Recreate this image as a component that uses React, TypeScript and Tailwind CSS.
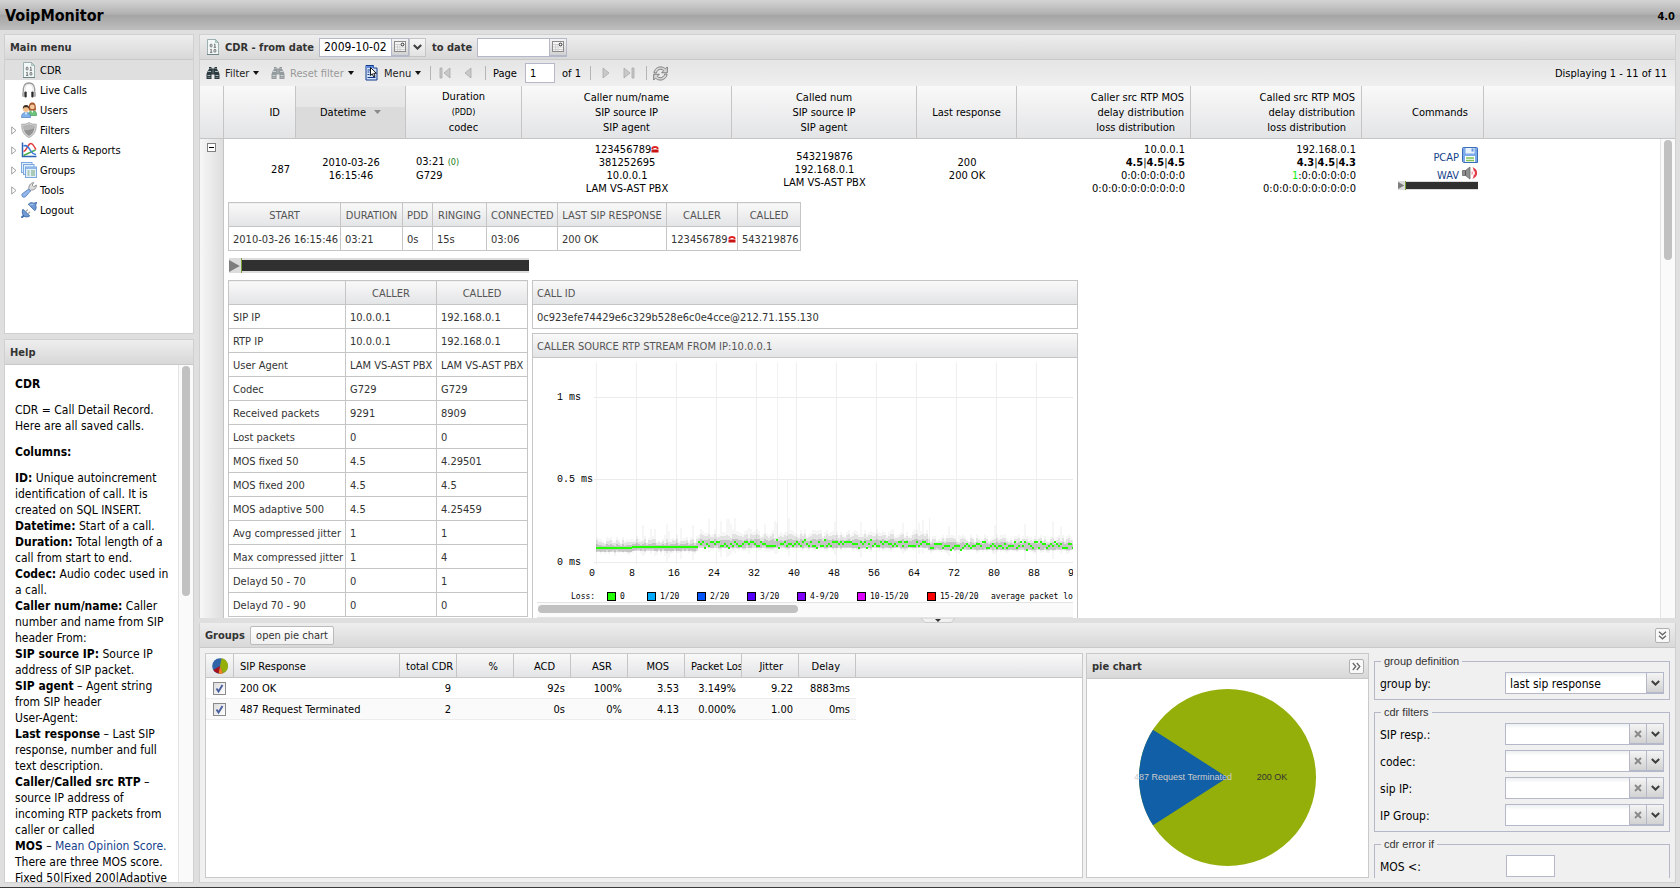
import { ReactNode } from "react";

const HEAD_BG = "bg-linear-to-b from-[#eeeeee] to-[#d8d8d8] border-b border-[#c9c9c9]";
const CELL_BG = "bg-linear-to-b from-[#f9f9f9] to-[#e3e4e6]";

/* ---------- icons ---------- */

const PageIcon = () => (
  <svg width="16" height="16" viewBox="0 0 16 16" className="shrink-0">
    <path d="M2.500 .5h8l3 3v12h-11z" fill="#f2f7f7" stroke="#9db0b0" />
    <path d="M10.500 .5v3h3z" fill="#b5dcd4" stroke="#8fa3a3" strokeWidth=".6" />
    <path d="M2 15.500h12" stroke="#6f8484" />
    <g fill="none" stroke="#555" strokeWidth=".8">
      <rect x="5.200" y="5.200" width="1.800" height="2.800" rx=".8" />
      <path d="M9 5.500l.9-.5v3.200M8.700 8.300h2.400M5.300 10.600l.9-.5v3.200M5 13.400h2.300" />
      <rect x="9" y="10.300" width="1.800" height="2.900" rx=".8" />
    </g>
  </svg>
);

const HeadphonesIcon = () => (
  <svg width="16" height="16" viewBox="0 0 16 16" className="shrink-0">
    <path d="M2.500 11C1.500 5 3.500 1 8 1s6.500 4 5.500 10" fill="none" stroke="#9a9a9a" strokeWidth="1.300" />
    <path d="M4 9.500C3.500 5 5.500 2.400 8 2.400s4.500 2.600 4 7.100" fill="none" stroke="#dcdcdc" strokeWidth=".9" />
    <rect x="1" y="9.500" width="3" height="5.500" rx="1.500" fill="#b5b5b5" />
    <rect x="3.500" y="9.500" width="2.200" height="6" rx="1" fill="#2d2d2d" />
    <rect x="12" y="9.500" width="3" height="5.500" rx="1.500" fill="#b5b5b5" />
    <rect x="10.300" y="9.500" width="2.200" height="6" rx="1" fill="#2d2d2d" />
  </svg>
);

const UsersIcon = () => (
  <svg width="16" height="16" viewBox="0 0 16 16" className="shrink-0">
    <path d="M7.500 13.500c0-3.500 1.500-5 4-5s4.300 1.500 4.300 5z" fill="#6cc47a" stroke="#3b8f4f" strokeWidth=".6" />
    <path d="M7.800 8.500C7.300 3 8.500.5 11.300.5S15.200 3 14.800 8.500z" fill="#a8552b" />
    <circle cx="11.300" cy="4.900" r="2.400" fill="#f5c99b" />
    <path d="M10.200 8.700l1.100 2.300 1.100-2.300z" fill="#fff" />
    <path d="M.4 15.500c0-3.500 1.700-5 4.600-5s4.600 1.500 4.600 5z" fill="#7fb2ea" stroke="#3d74b8" strokeWidth=".6" />
    <path d="M3.800 10.500L5 13l1.200-2.500z" fill="#fff" />
    <circle cx="5" cy="6.900" r="3" fill="#f3c08c" />
    <path d="M1.800 7.200c-.2-3 1.200-4.300 3.300-4.300S8.400 4.200 8.100 7.200C7.500 5.500 6.500 5.200 5 5.200s-2.600.3-3.200 2z" fill="#3a2a22" />
  </svg>
);

const ShieldIcon = () => (
  <svg width="16" height="16" viewBox="0 0 16 16" className="shrink-0">
    <path d="M8 .5c2 1.500 4 1.900 7.200 1.700C15.500 8.500 13.500 13 8 15.500 2.500 13 .5 8.500.8 2.200 4 2.400 6 2 8 .5z" fill="#d6d6d6" stroke="#a3a3a3" strokeWidth=".9" />
    <path d="M8 2.500c1.500 1 3 1.300 5.500 1.300C13.500 8.500 12 11.700 8 13.900 4 11.700 2.500 8.500 2.500 3.800 5 3.800 6.500 3.500 8 2.500z" fill="#929292" />
    <path d="M8 2.500C6.500 3.500 5 3.800 2.500 3.800c0 1.600.2 3 .6 4.200 3.400.6 7-.4 10.200-2 .2-.7.200-1.400.2-2.200C11 3.800 9.500 3.500 8 2.500z" fill="#b4b4b4" />
  </svg>
);

const ChartIcon = () => (
  <svg width="16" height="16" viewBox="0 0 16 16" className="shrink-0">
    <path d="M1.500 .5v14h14" fill="none" stroke="#2e63b4" strokeWidth="1.500" />
    <path d="M2.500 13.500L14.500 8" fill="none" stroke="#4caf50" strokeWidth="1.500" />
    <path d="M2.500 9.500C6 9 6.500 1.500 10 1.500c2.500 0 3 3.500 5 6" fill="none" stroke="#e23b3b" strokeWidth="1.500" />
    <path d="M2.500 4c3-1.500 5 1 7 4.500s3 3.500 5.500 4" fill="none" stroke="#3b78d8" strokeWidth="1.500" />
  </svg>
);

const GroupsIcon = () => (
  <svg width="16" height="16" viewBox="0 0 16 16" className="shrink-0">
    <g fill="#e4effc" stroke="#7ba8de">
      <rect x=".5" y=".5" width="10.500" height="10" />
      <rect x="2.500" y="2.500" width="10.500" height="10" />
      <rect x="4.500" y="5" width="11" height="10.500" />
    </g>
    <path d="M5 5h10v2H5z" fill="#8fb8e8" />
    <path d="M6.500 9h2M10 9h4M6.500 11h2M10 11h4M6.500 13h2M10 13h4" stroke="#6fa573" />
  </svg>
);

const WrenchIcon = () => (
  <svg width="16" height="16" viewBox="0 0 16 16" className="shrink-0">
    <path d="M8 7.500C7.200 4.200 9.300.8 12.800.6L11.200 3l1.600 1.700L15.300 3c.4 3-2 5.300-4.800 5L9 9.300z" fill="#dcdcdc" stroke="#8a8a8a" strokeWidth=".9" />
    <path d="M7.800 7l1.800 1.800-5 5.800c-2.200 1.900-4.800-.6-3.300-2.800z" fill="#93b7ea" stroke="#5580c0" strokeWidth=".9" />
  </svg>
);

const PlugIcon = () => (
  <svg width="16" height="16" viewBox="0 0 16 16" className="shrink-0">
    <path d="M.3 15.800L4 12.500" stroke="#3f6fb0" strokeWidth="2" />
    <path d="M2 7.200l6.800 6.800c-1.800 1.300-4.600 1.200-6 0S.6 9.200 2 7.200z" fill="#6f9ad6" stroke="#345f9e" strokeWidth=".8" />
    <path d="M4.800 9.500l2-2M7 11.700l2-2" stroke="#aaa" strokeWidth="1.300" />
    <path d="M7.300 2.200l6.500 6.500c1.800-2 1.600-4 .8-5.500L15.800.3l-3 .9c-1.600-1-4-.6-5.500 1z" fill="#6f9ad6" stroke="#345f9e" strokeWidth=".8" />
    <path d="M9 3.200c1-.8 2.300-1 3.300-.5" stroke="#bcd3f2" fill="none" />
  </svg>
);

const BinocularsIcon = ({ dim = false }: { dim?: boolean }) => (
  <svg width="14" height="14" viewBox="0 0 14 14" className={dim ? "shrink-0 opacity-45" : "shrink-0"}>
    <path d="M3 1h2.500v1.500h3V1H11v2l1.500 2.500 1 2.500v5h-5V8.500h-3V13h-5V8l1-2.500L3 3z" fill="#2c3a40" />
    <path d="M2 5.500h3M9 5.500h3M1.500 9.500h3M9.500 9.500h3" stroke="#a9b8bd" />
    <path d="M7 3.500v4M3.200 2.500h2M8.800 2.500h2M1.500 11.500h3M9.500 11.500h3" stroke="#7d8d93" strokeWidth=".8" />
  </svg>
);

const MenuIcon = () => (
  <svg width="14" height="16" viewBox="0 0 14 16" className="shrink-0">
    <path d="M1 .5h7.500V3H12v12H1z" fill="#d4e3fb" stroke="#143a8c" />
    <path d="M1.500 1h7v2h-7z" fill="#5a8be0" />
    <path d="M2.500 5h3M2.500 7h2M2.500 9.500h2M2.500 12.500h8" stroke="#143a8c" />
    <path d="M5.500 2.500v8l1.900-1.700 1.200 3 1.400-.6-1.200-2.900h2.600z" fill="#fff" stroke="#000" strokeWidth=".9" />
  </svg>
);

const CalendarIcon = () => (
  <svg width="12" height="11" viewBox="0 0 12 11">
    <rect x=".5" y=".5" width="11" height="10" fill="#f4f4f4" stroke="#8a8a8a" />
    <path d="M1 3.500h10M1 6h10M1 8.500h10M3.500 3v7M6 3v7" stroke="#c4c4c4" strokeWidth=".7" />
    <rect x="6.500" y="1.500" width="4" height="4" fill="#fff" />
    <circle cx="8.500" cy="3.500" r="1.400" fill="none" stroke="#222" />
  </svg>
);

const RefreshIcon = () => (
  <svg width="15" height="15" viewBox="0 0 16 16" fill="#d6d6d6" stroke="#6f6f6f" strokeWidth=".9" strokeLinejoin="round">
    <path d="M1 7.300C1.300 3.500 4.800.8 8.600 1c2 .1 3.500.9 4.600 2.100L15.300 1v6.200H9.200l2.200-2.300C10.500 4 9.500 3.500 8.300 3.500 6 3.500 4.200 5 3.600 7.300z" />
    <path d="M15 8.700c-.3 3.800-3.800 6.500-7.600 6.300-2-.1-3.500-.9-4.600-2.100L.7 15V8.800h6.100l-2.200 2.300c.9.9 1.900 1.400 3.100 1.400 2.300 0 4.100-1.500 4.700-3.800z" />
  </svg>
);

const DiskIcon = () => (
  <svg width="16" height="16" viewBox="0 0 16 16" className="shrink-0">
    <path d="M1.500 .5h13a1 1 0 0 1 1 1v14h-14l-1-1v-13a1 1 0 0 1 1-1z" fill="#7aaaea" stroke="#3a6cb8" />
    <rect x="3.500" y="1" width="9" height="5.500" fill="#e9f1fc" />
    <rect x="9.500" y="1.500" width="2" height="3" fill="#5f93dc" />
    <rect x="3" y="9" width="10" height="6" fill="#fff" />
    <path d="M4 11h8M4 13.500h8" stroke="#7cc255" strokeWidth="1.400" />
  </svg>
);

const SpeakerIcon = () => (
  <svg width="16" height="14" viewBox="0 0 16 14" className="shrink-0">
    <path d="M.5 4.500h3L8 1v12L3.500 9.500h-3z" fill="#8f8f8f" stroke="#6a6a6a" strokeWidth=".8" />
    <path d="M3.500 4.500v5" stroke="#555" />
    <path d="M9.800 5.500c.8 1 .8 2 0 3" fill="none" stroke="#f08a92" strokeWidth="1.200" />
    <path d="M11.800 2.500c3.600 2 3.600 7 0 9 1.300-3 1.300-6 0-9z" fill="#e23b4a" stroke="#e23b4a" strokeWidth="1.200" />
    <path d="M12 5c.7 1.300.7 2.700 0 4" fill="none" stroke="#fff" strokeWidth=".8" />
  </svg>
);

const RedPhoneIcon = () => (
  <svg width="8" height="8" viewBox="0 0 8 8" className="inline-block align-baseline">
    <path d="M.5 3C.5 .3 7.500 .3 7.500 3v1h-2V3h-3v1h-2z" fill="#e02020" />
    <rect x=".5" y="4.500" width="7" height="3" fill="#c81414" />
  </svg>
);

const PieIcon = () => (
  <svg width="16" height="16" viewBox="0 0 16 16" className="mx-auto">
    <circle cx="8" cy="8" r="7.800" fill="#2f64a8" />
    <path d="M8 8L9.500 .3A7.800 7.800 0 0 1 11 15.200z" fill="#94ae0a" />
    <path d="M8 8l3 7.200a7.800 7.800 0 0 1-4.500.4z" fill="#f58220" />
    <path d="M8 8l-1.500 7.600A7.800 7.800 0 0 1 1.200 12z" fill="#a61120" />
  </svg>
);

const Caret = () => (
  <svg width="6" height="4" viewBox="0 0 6 4" className="shrink-0">
    <path d="M0 0h6L3 4z" fill="#111" />
  </svg>
);

const Chevron = () => (
  <svg width="9" height="6" viewBox="0 0 9 6">
    <path d="M.8 1l3.700 3.500L8.200 1" fill="none" stroke="#3f3f3f" strokeWidth="2" />
  </svg>
);

const DoubleChevron = ({ className = "" }: { className?: string }) => (
  <svg width="9" height="9" viewBox="0 0 9 9" className={className} fill="none" stroke="#666" strokeWidth="1.300">
    <path d="M1 .8l3.500 3L8 .8M1 4.800l3.500 3L8 4.800" />
  </svg>
);

/* ---------- small parts ---------- */

const Trigger = ({ label, children }: { label: string; children: ReactNode }) => (
  <button
    type="button"
    aria-label={label}
    className="flex w-[17px] shrink-0 items-center justify-center border-b border-l border-[#b5b8c8] bg-linear-to-b from-[#f4f4f4] to-[#d2d2d2]"
  >
    {children}
  </button>
);

const Separator = () => <span className="h-[14px] w-px shrink-0 bg-[#b5b5b5]" />;

const ToolButton = ({ icon, text, disabled }: { icon: ReactNode; text: string; disabled?: boolean }) => (
  <button disabled={disabled} className={`flex items-center gap-1 ${disabled ? "text-[#999]" : "text-[#222]"}`}>
    {icon}
    <span className="pt-px pl-px">{text}</span>
    <Caret />
  </button>
);

const PageButton = ({ label, d }: { label: string; d: string }) => (
  <button aria-label={label}>
    <svg width="12" height="12" viewBox="0 0 12 12">
      <path d={d} fill="#c9c9c9" stroke="#aaa" strokeWidth=".8" />
    </svg>
  </button>
);

const Player = ({ small }: { small?: boolean }) => (
  <div className={`flex items-center bg-[#dcdcdc] ${small ? "h-[9px] w-20" : "h-[15px] w-[300px]"}`}>
    <svg width={small ? 7 : 12} height={small ? 7 : 12} viewBox="0 0 10 10" className="shrink-0">
      <path d="M0 0l9 5-9 5z" fill="#7d7d7d" />
    </svg>
    <span className="h-full w-px bg-[#7a9f35]" />
    <span className={`flex-1 bg-[#303030] ${small ? "h-[7px]" : "h-[11px]"}`} />
  </div>
);

/* ---------- sidebar ---------- */

const menuItems = [
  { text: "CDR", icon: <PageIcon />, selected: true },
  { text: "Live Calls", icon: <HeadphonesIcon /> },
  { text: "Users", icon: <UsersIcon /> },
  { text: "Filters", icon: <ShieldIcon />, children: true },
  { text: "Alerts & Reports", icon: <ChartIcon />, children: true },
  { text: "Groups", icon: <GroupsIcon />, children: true },
  { text: "Tools", icon: <WrenchIcon />, children: true },
  { text: "Logout", icon: <PlugIcon /> },
];

const MainMenu = () => (
  <nav className="h-[300px] shrink-0 border border-[#d0d0d0] bg-white">
    <h2 className={`flex h-[25px] items-center pl-[5px] font-bold text-[#333] ${HEAD_BG}`}>Main menu</h2>
    <ul>
      {menuItems.map((item) => (
        <li key={item.text}>
          <a href="#" className={`flex h-5 items-center ${item.selected ? "bg-[#dfdfdf]" : ""}`}>
            <span className="w-4 shrink-0 pl-[6px]">
              {item.children && (
                <svg width="6" height="9" viewBox="0 0 6 9">
                  <path d="M.7 .9L5 4.500.7 8.100z" fill="#fff" stroke="#999" strokeWidth=".9" />
                </svg>
              )}
            </span>
            {item.icon}
            <span className="pl-[3px]">{item.text}</span>
          </a>
        </li>
      ))}
    </ul>
  </nav>
);

const Help = () => (
  <section className="flex min-h-0 flex-1 flex-col border border-[#d0d0d0] bg-white">
    <h2 className={`flex h-[25px] shrink-0 items-center pl-[5px] font-bold text-[#333] ${HEAD_BG}`}>Help</h2>
    <div className="flex min-h-0 flex-1 overflow-hidden">
      <div className="flex-1 space-y-[10px] overflow-hidden pt-[11px] pl-[10px] text-xs leading-4 whitespace-nowrap">
        <p><b>CDR</b></p>
        <p>CDR = Call Detail Record.<br />Here are all saved calls.</p>
        <p><b>Columns:</b></p>
        <p>
          <b>ID:</b> Unique autoincrement<br />identification of call. It is<br />created on SQL INSERT.<br />
          <b>Datetime:</b> Start of a call.<br />
          <b>Duration:</b> Total length of a<br />call from start to end.<br />
          <b>Codec:</b> Audio codec used in<br />a call.<br />
          <b>Caller num/name:</b> Caller<br />number and name from SIP<br />header From:<br />
          <b>SIP source IP:</b> Source IP<br />address of SIP packet.<br />
          <b>SIP agent</b> – Agent string<br />from SIP header<br />User-Agent:<br />
          <b>Last response</b> – Last SIP<br />response, number and full<br />text description.<br />
          <b>Caller/Called src RTP</b> –<br />source IP address of<br />incoming RTP packets from<br />caller or called<br />
          <b>MOS</b> – <a href="#" className="text-[#15428b]">Mean Opinion Score.</a><br />
          There are three MOS score.<br />Fixed 50|Fixed 200|Adaptive
        </p>
      </div>
      <div className="w-[15px] shrink-0 border-l border-[#e4e4e4] bg-[#fafafa] pt-px pl-[3px]">
        <div className="h-[230px] w-2 rounded-full bg-[#c1c1c1]" />
      </div>
    </div>
  </section>
);

/* ---------- call record details ---------- */

const TH = `h-6 border border-[#c5c5c5] px-1 pt-px text-center font-normal text-[#555] ${CELL_BG}`;
const TD = "h-6 border border-[#c5c5c5] px-1 pt-px text-[#333]";

const callCols = [
  ["START", "w-[112px]"],
  ["DURATION", "w-[62px]"],
  ["PDD", "w-[30px]"],
  ["RINGING", "w-[54px]"],
  ["CONNECTED", "w-[71px]"],
  ["LAST SIP RESPONSE", "w-[109px]"],
  ["CALLER", "w-[71px]"],
  ["CALLED", "w-[63px]"],
];

const stats = [
  ["SIP IP", "10.0.0.1", "192.168.0.1"],
  ["RTP IP", "10.0.0.1", "192.168.0.1"],
  ["User Agent", "LAM VS-AST PBX", "LAM VS-AST PBX"],
  ["Codec", "G729", "G729"],
  ["Received packets", "9291", "8909"],
  ["Lost packets", "0", "0"],
  ["MOS fixed 50", "4.5", "4.29501"],
  ["MOS fixed 200", "4.5", "4.5"],
  ["MOS adaptive 500", "4.5", "4.25459"],
  ["Avg compressed jitter", "1", "1"],
  ["Max compressed jitter", "1", "4"],
  ["Delayd 50 - 70", "0", "1"],
  ["Delayd 70 - 90", "0", "0"],
];

const legend = [
  [70, "#22ff00", "0"],
  [110, "#00aaff", "1/20"],
  [160, "#0055ff", "2/20"],
  [210, "#5500ff", "3/20"],
  [260, "#8000ff", "4-9/20"],
  [320, "#dd00ff", "10-15/20"],
  [390, "#ff0000", "15-20/20"],
] as const;

// jitter samples, seeded so that every render draws the same curve
const makeSamples = () => {
  let seed = 7;
  const rnd = () => {
    seed = (seed * 16807) % 2147483647;
    return seed / 2147483647;
  };
  const out = [];
  for (let x = 59; x < 536; x += 2) {
    const zone = x < 160 ? 0 : x < 391 ? 1 : 2;
    const mid = zone === 0 ? (x < 95 ? 185 : 184) : zone === 1 ? 181 : 183;
    const y = mid + (zone === 0 ? Math.round(rnd() - 0.5) : Math.round((rnd() - 0.5) * 3.4) * 2);
    const up = [5, 8, 5][zone] + rnd() * 7;
    const down = 2 + rnd() * 6;
    const spike = rnd() > 0.88 ? 6 + rnd() * 8 : 0;
    out.push({ x, y, mid: mid + 1, up, down, spike });
  }
  return out;
};
const samples = makeSamples();

const RtpChart = () => (
  <svg width="536" height="240" viewBox="0 0 536 240" className="block">
    <g stroke="#f0f0f0" shapeRendering="crispEdges">
      {Array.from({ length: 12 }, (_, i) => (
        <path key={i} d={`M${59.5 + i * 40} 0v203`} />
      ))}
      <path d="M57 35.500h479M57 117.500h479M57 200.500h479" stroke="#ebebeb" />
      <path d="M240.500 0v185M250.500 117.500v70M392.500 156v30" stroke="#f2f2f2" />
    </g>
    <g shapeRendering="crispEdges">
      {samples.map((s) => (
        <g key={s.x}>
          <rect x={s.x} y={s.mid - s.up - s.spike} width="2" height={s.up + s.down + s.spike * 1.5} fill="#000" opacity=".035" />
          <rect x={s.x} y={s.mid - s.up * 0.7} width="2" height={s.up * 0.7 + s.down * 0.7} fill="#000" opacity=".08" />
          <rect x={s.x} y={s.mid - s.up * 0.35} width="2" height={s.up * 0.35 + 4} fill="#000" opacity=".13" />
          <rect x={s.x} y={s.y} width="2" height="2" fill="#22ff00" />
        </g>
      ))}
    </g>
    <g className="font-['Liberation_Mono',monospace] text-[10px]" fill="#000">
      <text x="20" y="38">1 ms</text>
      <text x="20" y="120">0.5 ms</text>
      <text x="20" y="203">0 ms</text>
      <text x="52" y="214">0</text>
      <text x="92" y="214">8</text>
      {[16, 24, 32, 40, 48, 56, 64, 72, 80, 88, 96].map((n, i) => (
        <text key={n} x={131 + i * 40} y="214">{n}</text>
      ))}
    </g>
    <g className="font-['DejaVu_Sans_Mono',monospace] text-[8px]" fill="#000">
      <text x="34" y="237">Loss:</text>
      {legend.map(([x, color, text]) => (
        <g key={text}>
          <rect x={x + 0.5} y="230.500" width="8" height="8" fill={color} stroke="#000" />
          <text x={x + 13} y="237">{text}</text>
        </g>
      ))}
      <text x="454" y="237">average packet loss</text>
    </g>
  </svg>
);

const CallDetails = () => (
  <div className="pt-1 pl-1">
    <table className="w-[573px] table-fixed border-collapse whitespace-nowrap">
      <thead>
        <tr>
          {callCols.map(([name, width]) => (
            <th key={name} className={`${TH} ${width}`}>{name}</th>
          ))}
        </tr>
      </thead>
      <tbody>
        <tr>
          <td className={TD}>2010-03-26 16:15:46</td>
          <td className={TD}>03:21</td>
          <td className={TD}>0s</td>
          <td className={TD}>15s</td>
          <td className={TD}>03:06</td>
          <td className={TD}>200 OK</td>
          <td className={TD}>123456789<RedPhoneIcon /></td>
          <td className={TD}>543219876</td>
        </tr>
      </tbody>
    </table>
    <div className="py-[7px] pl-px">
      <Player />
    </div>
    <div className="flex items-start gap-1">
      <table className="w-[300px] shrink-0 table-fixed border-collapse whitespace-nowrap">
        <thead>
          <tr>
            <th className={`${TH} w-[117px]`}></th>
            <th className={TH}>CALLER</th>
            <th className={TH}>CALLED</th>
          </tr>
        </thead>
        <tbody>
          {stats.map(([name, caller, called]) => (
            <tr key={name}>
              <td className={TD}>{name}</td>
              <td className={TD}>{caller}</td>
              <td className={TD}>{called}</td>
            </tr>
          ))}
        </tbody>
      </table>
      <div className="w-[546px] shrink-0 text-[#333]">
        <section className="border border-[#c5c5c5]">
          <h3 className={`flex h-6 items-center border-b border-[#c5c5c5] px-1 pt-px text-[#555] ${CELL_BG}`}>CALL ID</h3>
          <p className="flex h-[23px] items-center px-1 pt-px">0c923efe74429e6c329b528e6c0e4cce@212.71.155.130</p>
        </section>
        <section className="mt-1 border border-[#c5c5c5]">
          <h3 className={`flex h-6 items-center border-b border-[#c5c5c5] px-1 pt-px text-[#555] ${CELL_BG}`}>
            CALLER SOURCE RTP STREAM FROM IP:10.0.0.1
          </h3>
          <div className="p-1">
            <RtpChart />
            <div className="h-4 border-y border-[#e4e4e4] bg-[#fafafa] pt-[2px] pl-px">
              <div className="h-2 w-[260px] rounded-full bg-[#c1c1c1]" />
            </div>
          </div>
        </section>
      </div>
    </div>
  </div>
);

/* ---------- CDR grid ---------- */

const GH = `h-[53px] border-r border-b border-[#c5c5c5] font-normal leading-[15px] ${CELL_BG}`;

const CdrGrid = () => (
  <div className="relative min-h-0 flex-1 overflow-hidden bg-white">
    <table className="w-full table-fixed border-separate border-spacing-0 text-center leading-[13px]">
      <colgroup>
        <col className="w-[24px]" />
        <col className="w-[72px]" />
        <col className="w-[110px]" />
        <col className="w-[116px]" />
        <col className="w-[210px]" />
        <col className="w-[185px]" />
        <col className="w-[100px]" />
        <col className="w-[174px]" />
        <col className="w-[171px]" />
        <col className="w-[122px]" />
        <col />
      </colgroup>
      <thead>
        <tr>
          <th className={GH}></th>
          <th className={`${GH} pr-[15px] text-right`}>ID</th>
          <th className="h-[53px] border-r border-b border-[#c5c5c5] bg-linear-to-b from-[#ebebeb] from-0% via-[#e6e6e6] via-40% to-[#dbdbdb] to-41% font-normal">
            <button className="inline-flex items-center gap-2">
              Datetime
              <svg width="7" height="4" viewBox="0 0 7 4"><path d="M0 0h7L3.500 4z" fill="#8a8a8a" /></svg>
            </button>
          </th>
          <th className={GH}>Duration<br /><span className="text-[9px]">(PDD)</span><br />codec</th>
          <th className={GH}>Caller num/name<br />SIP source IP<br />SIP agent</th>
          <th className={GH}>Called num<br />SIP source IP<br />SIP agent</th>
          <th className={GH}>Last response</th>
          <th className={`${GH} pr-[6px] text-right`}>Caller src RTP MOS<br />delay distribution<br /><span className="pr-[9px]">loss distribution</span></th>
          <th className={`${GH} pr-[6px] text-right`}>Called src RTP MOS<br />delay distribution<br /><span className="pr-[9px]">loss distribution</span></th>
          <th className={`${GH} pr-[15px] text-right`}>Commands</th>
          <th className={`h-[53px] border-b border-[#c5c5c5] ${CELL_BG}`}></th>
        </tr>
      </thead>
      <tbody>
        <tr>
          <td rowSpan={2} className="border-r border-[#c5c5c5] bg-linear-to-r from-[#f7f7f7] to-[#dedede] pt-1 align-top">
            <button aria-label="collapse row" className="mx-auto flex size-[9px] items-center justify-center border border-[#808080] bg-white">
              <span className="h-px w-[5px] bg-black" />
            </button>
          </td>
          <td className="h-[59px] pt-px pr-[6px] text-right">287</td>
          <td>2010-03-26<br />16:15:46</td>
          <td className="pl-[10px] text-left">03:21 <span className="text-[9px] text-[#1a7a1a]">(0)</span><br />G729</td>
          <td>123456789<RedPhoneIcon /><br />381252695<br />10.0.0.1<br />LAM VS-AST PBX</td>
          <td className="pt-px">543219876<br />192.168.0.1<br />LAM VS-AST PBX</td>
          <td>200<br />200 OK</td>
          <td className="pr-[6px] text-right">10.0.0.1<br /><b>4.5</b>|<b>4.5</b>|<b>4.5</b><br />0:0:0:0:0:0:0<br />0:0:0:0:0:0:0:0:0:0</td>
          <td className="pr-[6px] text-right">192.168.0.1<br /><b>4.3</b>|<b>4.5</b>|<b>4.3</b><br /><span className="text-[#11ee11]">1</span>:0:0:0:0:0:0<br />0:0:0:0:0:0:0:0:0:0</td>
          <td className="pr-[6px] pb-[2px]">
            <div className="flex flex-col items-end text-[#15428b]">
              <a href="#" className="flex h-5 items-center gap-[3px]"><span className="pt-[5px]">PCAP</span><DiskIcon /></a>
              <a href="#" className="flex h-4 items-center gap-[3px]"><span className="pt-[5px]">WAV</span><SpeakerIcon /></a>
              <Player small />
            </div>
          </td>
          <td></td>
        </tr>
        <tr>
          <td colSpan={10} className="text-left align-top"><CallDetails /></td>
        </tr>
      </tbody>
    </table>
    <div className="absolute top-[53px] right-0 bottom-0 w-[15px] border-l border-[#e4e4e4] bg-[#fafafa] pt-px pl-[3px]">
      <div className="h-[120px] w-2 rounded-full bg-[#c1c1c1]" />
    </div>
  </div>
);

const CdrPanel = () => (
  <section className="flex min-h-0 flex-1 flex-col border border-b-0 border-[#d0d0d0]">
    <header className={`flex h-[25px] shrink-0 items-center pl-[5px] font-bold text-[#333] ${HEAD_BG}`}>
      <PageIcon />
      <label htmlFor="from" className="w-[98px] pl-1">CDR - from date</label>
      <div className="flex h-[19px] w-[90px] border border-[#b5b8c8] bg-white">
        <input id="from" defaultValue="2009-10-02" className="w-0 flex-1 pl-1 text-xs font-normal text-black outline-none" />
        <Trigger label="pick from date"><CalendarIcon /></Trigger>
      </div>
      <button aria-label="more dates" className="flex h-[19px] w-[17px] items-center justify-center border border-[#c5c5c5] bg-linear-to-b from-[#f6f6f6] to-[#e2e2e2]">
        <Chevron />
      </button>
      <label htmlFor="to" className="w-[51px] pl-[6px]">to date</label>
      <div className="flex h-[19px] w-[90px] border border-[#b5b8c8] bg-white">
        <input id="to" className="w-0 flex-1 pl-1 text-xs font-normal text-black outline-none" />
        <Trigger label="pick to date"><CalendarIcon /></Trigger>
      </div>
    </header>
    <div className="flex h-[26px] shrink-0 items-center bg-linear-to-b from-[#e5e5e5] to-[#efefef] pr-2 pl-[6px]">
      <div className="w-[65px]"><ToolButton icon={<BinocularsIcon />} text="Filter" /></div>
      <div className="w-[94px]"><ToolButton icon={<BinocularsIcon dim />} text="Reset filter" disabled /></div>
      <div className="w-[65px]"><ToolButton icon={<MenuIcon />} text="Menu" /></div>
      <Separator />
      <div className="flex w-[54px] items-center gap-3 pl-2">
        <PageButton label="first page" d="M1 1h2v10H1zM11 1v10L5 6z" />
        <PageButton label="previous page" d="M8 1v10L2 6z" />
      </div>
      <Separator />
      <label htmlFor="page" className="w-[39px] pl-[7px]">Page</label>
      <input id="page" defaultValue="1" className="h-5 w-[30px] border border-[#b5b8c8] bg-white pl-1 outline-none" />
      <span className="w-[35px] pl-[7px]">of 1</span>
      <Separator />
      <div className="flex w-[55px] items-center gap-[11px] pl-[9px]">
        <PageButton label="next page" d="M3 1v10l6-5z" />
        <PageButton label="last page" d="M9 1h2v10H9zM1 1v10l6-5z" />
      </div>
      <Separator />
      <button aria-label="refresh" className="pl-[6px]"><RefreshIcon /></button>
      <span className="ml-auto pt-px">Displaying 1 - 11 of 11</span>
    </div>
    <CdrGrid />
  </section>
);

/* ---------- groups ---------- */

const groupHeads = ["total CDR", "%", "ACD", "ASR", "MOS", "Packet Loss", "Jitter", "Delay"];
const groupRows = [
  ["200 OK", "9", "", "92s", "100%", "3.53", "3.149%", "9.22", "8883ms"],
  ["487 Request Terminated", "2", "", "0s", "0%", "4.13", "0.000%", "1.00", "0ms"],
];

const GroupsTable = () => (
  <div className="min-w-0 flex-1 overflow-hidden border border-[#c9c9c9] bg-white">
    <table className="w-full table-fixed border-separate border-spacing-0 whitespace-nowrap">
      <thead>
        <tr>
          <th className={`h-6 w-[28px] border-r border-b border-[#c5c5c5] ${CELL_BG}`}><PieIcon /></th>
          <th className={`w-[166px] border-r border-b border-[#c5c5c5] pt-px pl-[6px] text-left font-normal ${CELL_BG}`}>SIP Response</th>
          {groupHeads.map((h) => (
            <th key={h} className={`w-[57px] overflow-hidden border-r border-b border-[#c5c5c5] pt-px pr-[15px] pl-[6px] text-right font-normal ${CELL_BG}`}>{h}</th>
          ))}
          <th className={`border-b border-[#c5c5c5] ${CELL_BG}`}></th>
        </tr>
      </thead>
      <tbody>
        {groupRows.map(([name, ...cells], r) => (
          <tr key={name} className={r % 2 ? "[&>td:not(:last-child)]:bg-[#fafafa]" : ""}>
            <td className="h-[21px] border-b border-[#ededed] pr-[2px]">
              <span className="relative mx-auto block size-[13px]">
                <input type="checkbox" defaultChecked aria-label={name} className="peer block size-[13px] appearance-none border border-[#8a8a8a] bg-linear-to-br from-[#dcdcdc] to-white" />
                <svg viewBox="0 0 13 13" className="pointer-events-none absolute inset-0 hidden size-[13px] peer-checked:block">
                  <path d="M3.500 6.500L5.500 9.500 9.500 3" fill="none" stroke="#4a5f9e" strokeWidth="1.900" />
                </svg>
              </span>
            </td>
            <td className="border-b border-[#ededed] pl-[6px]">{name}</td>
            {cells.map((c, i) => (
              <td key={i} className="border-b border-[#ededed] pr-[6px] text-right">{c}</td>
            ))}
            <td></td>
          </tr>
        ))}
      </tbody>
    </table>
  </div>
);

const PieChart = () => (
  <section className="flex w-[283px] shrink-0 flex-col border border-[#c9c9c9] bg-white">
    <header className={`flex h-[25px] shrink-0 items-center justify-between pr-1 pl-[5px] font-bold text-[#333] ${HEAD_BG}`}>
      pie chart
      <button aria-label="collapse pie chart" className="flex size-[15px] items-center justify-center rounded-xs border border-[#b0b0b0] bg-[#f8f8f8]">
        <DoubleChevron className="-rotate-90" />
      </button>
    </header>
    <svg viewBox="0 0 281 198" className="min-h-0 w-full flex-1">
      <circle cx="140.500" cy="98.500" r="88.500" fill="#94ae0a" />
      <path d="M140.500 98.500L66 50.700A88.500 88.500 0 0 0 66 146.300z" fill="#115fa6" />
      <g className="font-['Liberation_Sans',Arial,sans-serif] text-[9px]" textAnchor="middle">
        <text x="96" y="101" fill="#ccc">487 Request Terminated</text>
        <text x="185" y="101" fill="#333">200 OK</text>
      </g>
    </svg>
  </section>
);

const FieldBox = ({ title, className, children }: { title: string; className?: string; children: ReactNode }) => (
  <fieldset className={`min-w-0 border border-[#b5b8c8] px-[5px] ${className}`}>
    <legend className="ml-px px-[3px] font-['Liberation_Sans',Arial,sans-serif] text-[11px] leading-3 text-[#333]">{title}</legend>
    {children}
  </fieldset>
);

const FilterRow = ({ id, text }: { id: string; text: string }) => (
  <div className="flex h-[22px] items-center justify-between">
    <label htmlFor={id} className="pt-px text-xs">{text}</label>
    <div className="flex h-[22px] w-[159px] border border-[#b5b8c8] bg-white">
      <input id={id} className="w-0 flex-1 bg-linear-to-b from-[#edf0f1] to-white to-25% pl-1 outline-none" />
      <Trigger label={`clear ${text}`}>
        <svg width="8" height="8" viewBox="0 0 8 8"><path d="M1 1l6 6M7 1L1 7" stroke="#888" strokeWidth="1.800" /></svg>
      </Trigger>
      <Trigger label={`open ${text}`}><Chevron /></Trigger>
    </div>
  </div>
);

const GroupForm = () => (
  <form className="ml-[2px] w-[296px] shrink-0 overflow-hidden pt-[2px]">
    <FieldBox title="group definition" className="h-[45px]">
      <div className="mt-[5px] flex items-center justify-between">
        <label htmlFor="group-by" className="pt-px text-xs">group by:</label>
        <div className="flex h-[22px] w-[159px] border border-[#b5b8c8] bg-white">
          <select id="group-by" className="w-0 flex-1 appearance-none bg-linear-to-b from-[#edf0f1] to-white to-25% pt-px pl-1 text-xs outline-none">
            <option>last sip response</option>
            <option>codec</option>
          </select>
          <Trigger label="open group by"><Chevron /></Trigger>
        </div>
      </div>
    </FieldBox>
    <FieldBox title="cdr filters" className="mt-[6px] h-[126px]">
      <div className="mt-[5px] flex flex-col gap-[5px]">
        <FilterRow id="sip-resp" text="SIP resp.:" />
        <FilterRow id="codec" text="codec:" />
        <FilterRow id="sip-ip" text="sip IP:" />
        <FilterRow id="ip-group" text="IP Group:" />
      </div>
    </FieldBox>
    <FieldBox title="cdr error if" className="mt-[6px] h-[80px]">
      <div className="mt-[5px] flex h-[22px] items-center">
        <label htmlFor="mos" className="w-[126px] pt-px text-xs">MOS &lt;:</label>
        <input id="mos" className="h-[22px] w-[49px] border border-[#b5b8c8] bg-white pl-1 outline-none" />
      </div>
    </FieldBox>
  </form>
);

const GroupsPanel = () => (
  <section className="flex h-[260px] shrink-0 flex-col border border-t-0 border-[#d0d0d0] bg-[#f0f0f0]">
    <header className={`flex h-[25px] shrink-0 items-center px-[5px] font-bold text-[#333] ${HEAD_BG}`}>
      <span className="w-[45px]">Groups</span>
      <button className="h-[19px] w-[84px] rounded-xs border border-[#bbb] bg-linear-to-b from-white to-[#f0f0f0] pt-px font-normal">open pie chart</button>
      <button aria-label="collapse groups" className="ml-auto flex size-[15px] items-center justify-center rounded-xs border border-[#b0b0b0] bg-[#f8f8f8]">
        <DoubleChevron />
      </button>
    </header>
    <div className="flex min-h-0 flex-1 gap-[3px] px-[5px] pt-[5px] pb-1">
      <GroupsTable />
      <PieChart />
      <GroupForm />
    </div>
  </section>
);

const App = () => (
  <div className="flex h-screen flex-col overflow-hidden bg-[#dfdfdf] font-['DejaVu_Sans_Condensed',Tahoma,sans-serif] text-[11px] leading-[15px] text-black">
    <header className="flex h-[30px] shrink-0 items-center justify-between bg-[linear-gradient(to_bottom,#d4d4d4_0%,#b0b0b0_48%,#a4a4a4_50%,#bebebe_100%)] px-[5px] pt-px font-bold">
      <h1 className="text-base">VoipMonitor</h1>
      <span className="pt-px">4.0</span>
    </header>
    <div className="flex min-h-0 flex-1 gap-[5px] p-1">
      <aside className="flex w-[190px] shrink-0 flex-col gap-[5px]">
        <MainMenu />
        <Help />
      </aside>
      <main className="flex min-w-0 flex-1 flex-col">
        <CdrPanel />
        <button aria-label="toggle groups" className="flex h-[5px] shrink-0 justify-center">
          <svg width="34" height="5" viewBox="0 0 34 5">
            <path d="M0 0h34l-4 4.500H4z" fill="#f0f0f0" stroke="#c0c0c0" strokeWidth=".7" />
            <path d="M14 1h6l-3 3z" fill="#333" />
          </svg>
        </button>
        <GroupsPanel />
      </main>
    </div>
    <div className="h-px shrink-0 bg-[#3a3a3a]" />
  </div>
);

export default App;
